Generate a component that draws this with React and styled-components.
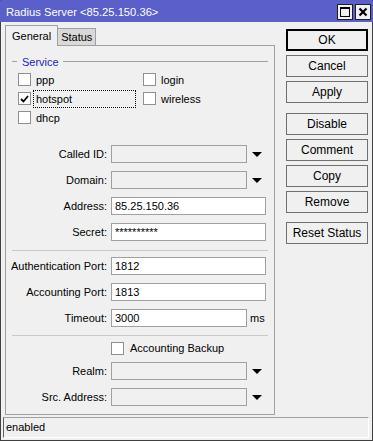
import styled, { createGlobalStyle } from "styled-components";

const GlobalStyle = createGlobalStyle`
  html, body {
    margin: 0;
    padding: 0;
    background: #f0f0f0;
  }
  body {
    font-family: "Liberation Sans", Arial, sans-serif;
    font-size: 11px;
    color: #000;
  }
  * {
    box-sizing: border-box;
  }
`;

const Window = styled.div`
    width: 373px;
    height: 441px;
    display: flex;
    flex-direction: column;
    background: #f0f0f0;
    border: 1px solid #404040;
    border-top-color: #5b5fc9;
`;

const TitleBar = styled.div`
    height: 21px;
    flex: none;
    display: flex;
    align-items: center;
    justify-content: space-between;
    padding: 0 2px 0 6px;
    background: #5b5fc9;
    color: #fff;
    font-size: 11.2px;
    margin: 0 -1px;
`;

const TitleButtons = styled.div`
    display: flex;
    gap: 2px;
`;

const TitleButton = styled.div`
    width: 16px;
    height: 16px;
    display: flex;
    align-items: center;
    justify-content: center;
    background: #f0f0f0;
    border: 1px solid #202020;
`;

const Body = styled.div`
    display: flex;
    padding: 3px 0 0 4px;
    height: 393px;
    flex: none;
`;

const LeftColumn = styled.div`
    width: 270px;
    display: flex;
    flex-direction: column;
`;

const TabRow = styled.div`
    display: flex;
    align-items: flex-end;
    height: 20px;
`;

const Tab = styled.div`
    position: relative;
    display: flex;
    align-items: center;
    padding: ${p => (p.$active ? "0 6px" : "0 3px")};
    border: 1px solid #a0a0a0;
    border-bottom: none;
    height: ${p => (p.$active ? "21px" : "17px")};
    margin-bottom: ${p => (p.$active ? "-1px" : "0")};
    background: ${p => (p.$active ? "#f0f0f0" : "#d9d9d9")};
    border-left: ${p => (p.$active ? "1px solid #a0a0a0" : "none")};
    z-index: ${p => (p.$active ? 1 : 0)};
`;

const Panel = styled.div`
    height: 370px;
    border: 1px solid #a0a0a0;
    display: flex;
    flex-direction: column;
`;

const Legend = styled.div`
    display: flex;
    align-items: center;
    height: 13px;
    margin: 9px 6px 0 6px;

    &::before {
        content: "";
        width: 5px;
        height: 1px;
        background: #a0a0a0;
    }
    span {
        color: #1c1cc8;
        padding: 0 4px 0 5px;
    }
    &::after {
        content: "";
        flex: 1;
        height: 1px;
        background: #a0a0a0;
    }
`;

const CheckGrid = styled.div`
    display: grid;
    grid-template-columns: 125px 1fr;
    grid-auto-rows: 19px;
    margin-top: 2px;
    padding-left: 12px;
`;

const CheckItem = styled.div`
    display: flex;
    align-items: center;
    gap: 2px;
`;

const Box = styled.div`
    width: 13px;
    height: 13px;
    flex: none;
    border: 1px solid #8f8f8f;
    background: #fff;
    display: flex;
    align-items: center;
    justify-content: center;
`;

const CheckLabel = styled.span`
    display: inline-block;
    padding: 1px 2px;
    border: 1px dotted ${p => (p.$focus ? "#000" : "transparent")};
    width: ${p => (p.$focus ? "103px" : "auto")};
    line-height: 14px;
`;

const Row = styled.div`
    display: flex;
    align-items: center;
    height: 18px;
    margin-top: ${p => p.$top || 8}px;
`;

const FieldLabel = styled.div`
    width: 101px;
    text-align: right;
    margin-right: 4px;
    white-space: nowrap;
`;

const TextBox = styled.div`
    width: ${p => p.$width || 155}px;
    height: 18px;
    border: 1px solid #a0a0a0;
    background: ${p => (p.$combo ? "#f0f0f0" : "#fff")};
    padding: 0 3px;
    line-height: 16px;
    white-space: nowrap;
`;

const DropArrow = styled.div`
    width: 19px;
    display: flex;
    justify-content: center;

    &::after {
        content: "";
        border-left: 5px solid transparent;
        border-right: 5px solid transparent;
        border-top: 5px solid #000;
    }
`;

const Unit = styled.span`
    margin-left: 3px;
`;

const Separator = styled.div`
    height: 1px;
    background: #c8c8c8;
    margin: ${p => p.$top}px 6px 0 6px;
`;

const BackupItem = styled(CheckItem)`
    margin-left: 105px;
    gap: 6px;
`;

const ButtonColumn = styled.div`
    width: 82px;
    margin-left: 11px;
    padding-top: 4px;
    display: flex;
    flex-direction: column;
`;

const Button = styled.div`
    height: 22px;
    margin-top: ${p => p.$gap || 0}px;
    display: flex;
    align-items: center;
    justify-content: center;
    background: #f0f0f0;
    font-size: 12px;
    border: ${p => (p.$primary ? "2px solid #000" : "1px solid #707070")};
`;

const StatusBar = styled.div`
    height: 21px;
    margin: 2px 3px 2px 2px;
    border: 1px solid;
    border-color: #a0a0a0 #fff #fff #606060;
    padding-left: 2px;
    line-height: 19px;
`;

function Check({ checked }) {
    return (
        <Box>
            {checked && (
                <svg width="9" height="8" viewBox="0 0 9 8">
                    <path d="M1 4 L3.5 6.5 L8 1" fill="none" stroke="#000" strokeWidth="1.8" />
                </svg>
            )}
        </Box>
    );
}

function Field({ label, value, combo, width, unit, top }) {
    return (
        <Row $top={top}>
            <FieldLabel>{label}</FieldLabel>
            <TextBox $combo={combo} $width={combo ? 136 : width}>{value}</TextBox>
            {combo && <DropArrow />}
            {unit && <Unit>{unit}</Unit>}
        </Row>
    );
}

const buttons = [
    { text: "OK", primary: true },
    { text: "Cancel", gap: 4 },
    { text: "Apply", gap: 4 },
    { text: "Disable", gap: 10 },
    { text: "Comment", gap: 4 },
    { text: "Copy", gap: 4 },
    { text: "Remove", gap: 4 },
    { text: "Reset Status", gap: 9 },
];

export default function App() {
    return (
        <>
            <GlobalStyle />
            <Window>
                <TitleBar>
                    <span>Radius Server &lt;85.25.150.36&gt;</span>
                    <TitleButtons>
                        <TitleButton>
                            <svg width="10" height="10" viewBox="0 0 10 10">
                                <rect x="0.5" y="0.5" width="9" height="9" fill="none" stroke="#000" />
                                <rect x="0" y="0" width="10" height="2" fill="#000" />
                            </svg>
                        </TitleButton>
                        <TitleButton>
                            <svg width="10" height="10" viewBox="0 0 10 10">
                                <path d="M1.5 1.5 L8.5 8.5 M8.5 1.5 L1.5 8.5" stroke="#000" strokeWidth="2.2" />
                            </svg>
                        </TitleButton>
                    </TitleButtons>
                </TitleBar>
                <Body>
                    <LeftColumn>
                        <TabRow>
                            <Tab $active>General</Tab>
                            <Tab>Status</Tab>
                        </TabRow>
                        <Panel>
                            <Legend><span>Service</span></Legend>
                            <CheckGrid>
                                <CheckItem><Check /><CheckLabel>ppp</CheckLabel></CheckItem>
                                <CheckItem><Check /><CheckLabel>login</CheckLabel></CheckItem>
                                <CheckItem><Check checked /><CheckLabel $focus>hotspot</CheckLabel></CheckItem>
                                <CheckItem><Check /><CheckLabel>wireless</CheckLabel></CheckItem>
                                <CheckItem><Check /><CheckLabel>dhcp</CheckLabel></CheckItem>
                            </CheckGrid>

                            <Field label="Called ID:" combo top={18} />
                            <Field label="Domain:" combo />
                            <Field label="Address:" value="85.25.150.36" />
                            <Field label="Secret:" value="**********" />

                            <Separator $top={9} />

                            <Field label="Authentication Port:" value="1812" top={6} />
                            <Field label="Accounting Port:" value="1813" />
                            <Field label="Timeout:" value="3000" width={136} unit="ms" />

                            <Separator $top={8} />

                            <Row $top={3}>
                                <BackupItem><Check /><span>Accounting Backup</span></BackupItem>
                            </Row>
                            <Field label="Realm:" combo top={5} />
                            <Field label="Src. Address:" combo />
                        </Panel>
                    </LeftColumn>
                    <ButtonColumn>
                        {buttons.map(b => (
                            <Button key={b.text} $primary={b.primary} $gap={b.gap}>{b.text}</Button>
                        ))}
                    </ButtonColumn>
                </Body>
                <StatusBar>enabled</StatusBar>
            </Window>
        </>
    );
}
